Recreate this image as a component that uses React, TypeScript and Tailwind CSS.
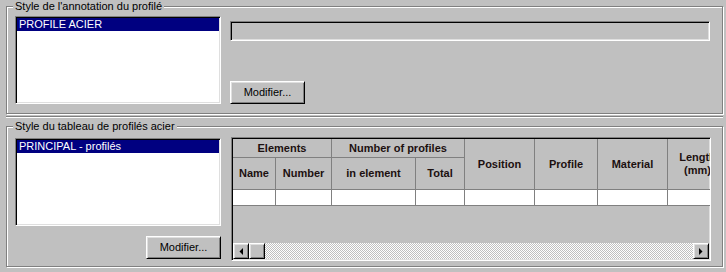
const sunken =
  "border border-t-[#808080] border-l-[#808080] border-r-white border-b-white shadow-[inset_1px_1px_0_#000,inset_-1px_-1px_0_#dfdfdf]";
const raised =
  "border border-t-white border-l-white border-r-black border-b-black shadow-[inset_1px_1px_0_#dfdfdf,inset_-1px_-1px_0_#808080]";
const etched =
  "relative border border-[#808080] shadow-[inset_1px_1px_0_#fff,1px_1px_0_#fff]";
const cell =
  "flex items-center justify-center text-center border-r border-b border-[#808080] leading-[13px] whitespace-nowrap";

function GroupLabel({ children }: { children: React.ReactNode }) {
  return (
    <span className="absolute left-[6px] top-[-7px] bg-[#c0c0c0] px-[2px] leading-[13px] text-black">
      {children}
    </span>
  );
}

function ListBox({ item }: { item: string }) {
  return (
    <div className={`w-[206px] h-[88px] bg-white p-[1px] ${sunken}`}>
      <div className="h-[13px] bg-[#000080] text-white leading-[13px] pl-[2px]">
        {item}
      </div>
    </div>
  );
}

function Button({ children }: { children: React.ReactNode }) {
  return (
    <div
      className={`w-[75px] h-[23px] flex items-center justify-center bg-[#c0c0c0] text-black ${raised}`}
    >
      {children}
    </div>
  );
}

function Arrow({ dir }: { dir: "left" | "right" }) {
  return (
    <div className={`w-[16px] h-[16px] flex items-center justify-center bg-[#c0c0c0] ${raised}`}>
      <svg width="4" height="7" viewBox="0 0 4 7">
        {dir === "left" ? (
          <polygon points="4,0 4,7 0.5,3.5" fill="#000" />
        ) : (
          <polygon points="0,0 0,7 3.5,3.5" fill="#000" />
        )}
      </svg>
    </div>
  );
}

function ProfileGrid() {
  const head = `${cell} font-bold text-[#1c1010]`;
  return (
    <div className={`w-[480px] h-[124px] flex flex-col overflow-hidden bg-[#c0c0c0] ${sunken}`}>
      <div className="flex-1 overflow-hidden p-[1px] pb-0">
        <div className="grid grid-cols-[43px_56px_84px_49px_70px_63px_70px_60px] grid-rows-[19px_32px_16px] w-[495px]">
          <div className={`${head} col-span-2`}>Elements</div>
          <div className={`${head} col-span-2`}>Number of profiles</div>
          <div className={`${head} row-span-2`}>Position</div>
          <div className={`${head} row-span-2`}>Profile</div>
          <div className={`${head} row-span-2`}>Material</div>
          <div className={`${head} row-span-2`}>
            Length
            <br />
            (mm)
          </div>
          <div className={head}>Name</div>
          <div className={head}>Number</div>
          <div className={head}>in element</div>
          <div className={head}>Total</div>
          {Array.from({ length: 8 }).map((_, i) => (
            <div key={i} className={`${cell} bg-white`} />
          ))}
        </div>
      </div>
      {/* horizontal scroll bar */}
      <div className="flex h-[16px] mx-[1px] mb-[1px]">
        <Arrow dir="left" />
        <div className={`w-[16px] h-[16px] bg-[#c0c0c0] ${raised}`} />
        <div className="flex-1 bg-[repeating-conic-gradient(#fff_0_25%,#c0c0c0_0_50%)] bg-[length:2px_2px]" />
        <Arrow dir="right" />
      </div>
    </div>
  );
}

export default function App() {
  return (
    <div
      className="w-[726px] h-[272px] bg-[#c0c0c0] overflow-hidden pl-[6px] pt-[6px] text-[11px] text-black"
      style={{ fontFamily: '"Liberation Sans", Arial, sans-serif' }}
    >
      {/* Annotation style */}
      <div className={`${etched} w-[717px] h-[108px] pl-[8px] pt-[9px] flex gap-[9px]`}>
        <GroupLabel>Style de l'annotation du profilé</GroupLabel>
        <ListBox item="PROFILE ACIER" />
        <div className="flex flex-col justify-between h-[88px] pt-[5px]">
          <div className={`w-[480px] h-[20px] bg-[#c0c0c0] ${sunken}`} />
          <Button>Modifier...</Button>
        </div>
      </div>

      <div className="mt-[2px] w-[717px] h-[2px] border-t border-t-[#808080] border-b border-b-white" />

      {/* Steel profile table style */}
      <div className={`${etched} mt-[8px] w-[717px] h-[141px] pl-[8px] pt-[10px] flex gap-[10px]`}>
        <GroupLabel>Style du tableau de profilés acier</GroupLabel>
        <div className="flex flex-col items-end">
          <div className="mt-[1px]">
            <ListBox item="PRINCIPAL - profilés" />
          </div>
          <div className="mt-[10px]">
            <Button>Modifier...</Button>
          </div>
        </div>
        <ProfileGrid />
      </div>
    </div>
  );
}
